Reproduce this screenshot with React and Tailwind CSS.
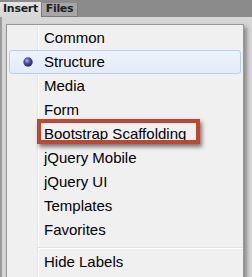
import React from "react";

const ITEMS = [
  "Common", "Structure", "Media", "Form", "Bootstrap Scaffolding",
  "jQuery Mobile", "jQuery UI", "Templates", "Favorites",
];

const font = { fontFamily: '"Liberation Sans", Arial, sans-serif' };

function Bullet() {
  return (
    <svg width="10" height="10" viewBox="0 0 10 10">
      <defs>
        <radialGradient id="bl" cx="40%" cy="35%" r="65%">
          <stop offset="0%" stopColor="#b4b4ec" />
          <stop offset="45%" stopColor="#5050a8" />
          <stop offset="100%" stopColor="#26266a" />
        </radialGradient>
      </defs>
      <circle cx="5" cy="5" r="4.7" fill="url(#bl)" />
    </svg>
  );
}

export default function App() {
  return (
    <div className="w-[252px] h-[277px] overflow-hidden bg-[#d6d6d6] flex flex-col">
      {/* tab strip */}
      <div className="h-[17px] bg-[#8b8b8b] flex items-end shrink-0 text-[11px] font-bold text-[#1e1e1e]"
        style={{ fontFamily: '"DejaVu Sans", sans-serif', letterSpacing: "-0.3px" }}>
        <div className="h-[15px] w-[42px] bg-gradient-to-b from-[#e4e4e4] to-[#d6d6d6] border-r border-[#7c7c7c] flex items-center justify-center">
          Insert
        </div>
        <div className="h-[14px] w-[36px] bg-[#a6a6a6] border-r border-b border-[#7c7c7c] flex items-center justify-center">
          Files
        </div>
      </div>

      {/* panel body */}
      <div className="flex-1 border-l-2 border-[#9c9c9c] pl-[4px] pt-[7px]">
        <div className="relative w-[238px] h-[270px] bg-[#f0f0f0] border border-b-0 border-[#979797] pt-[1px] shadow-[3px_3px_4px_rgba(0,0,0,0.35)]"
          style={font}>
          {/* gutter */}
          <div className="absolute left-[30px] top-0 bottom-0 w-px bg-[#e2e3e3]" />
          <div className="absolute left-[31px] top-0 bottom-0 w-px bg-white" />

          {ITEMS.map((label) =>
            label === "Structure" ? (
              <div key={label} className="relative mx-[2px] h-[24px] flex items-center rounded-[3px] border border-[#b3d0f3] bg-gradient-to-b from-[#eef3fb] to-[#e4ebf7]">
                <span className="w-[34px] flex justify-center pl-[1px]"><Bullet /></span>
                <span className="text-[15px] text-black">{label}</span>
              </div>
            ) : (
              <div key={label} className="relative h-[24px] flex items-center pl-[37px] text-[15px] text-black">
                {label}
              </div>
            )
          )}

          {/* separator */}
          <div className="relative h-[8px] pl-[31px] pt-[5px]">
            <div className="h-px bg-[#e2e3e3]" />
            <div className="h-px bg-white" />
          </div>
          <div className="relative h-[24px] flex items-center pl-[37px] text-[15px] text-black">
            Hide Labels
          </div>

          {/* annotation box */}
          <div className="absolute left-[30px] top-[94px] w-[163px] h-[25px] border-[4px] border-[#c0462f] shadow-[2px_3px_4px_rgba(0,0,0,0.5)]" />
        </div>
      </div>
    </div>
  );
}
